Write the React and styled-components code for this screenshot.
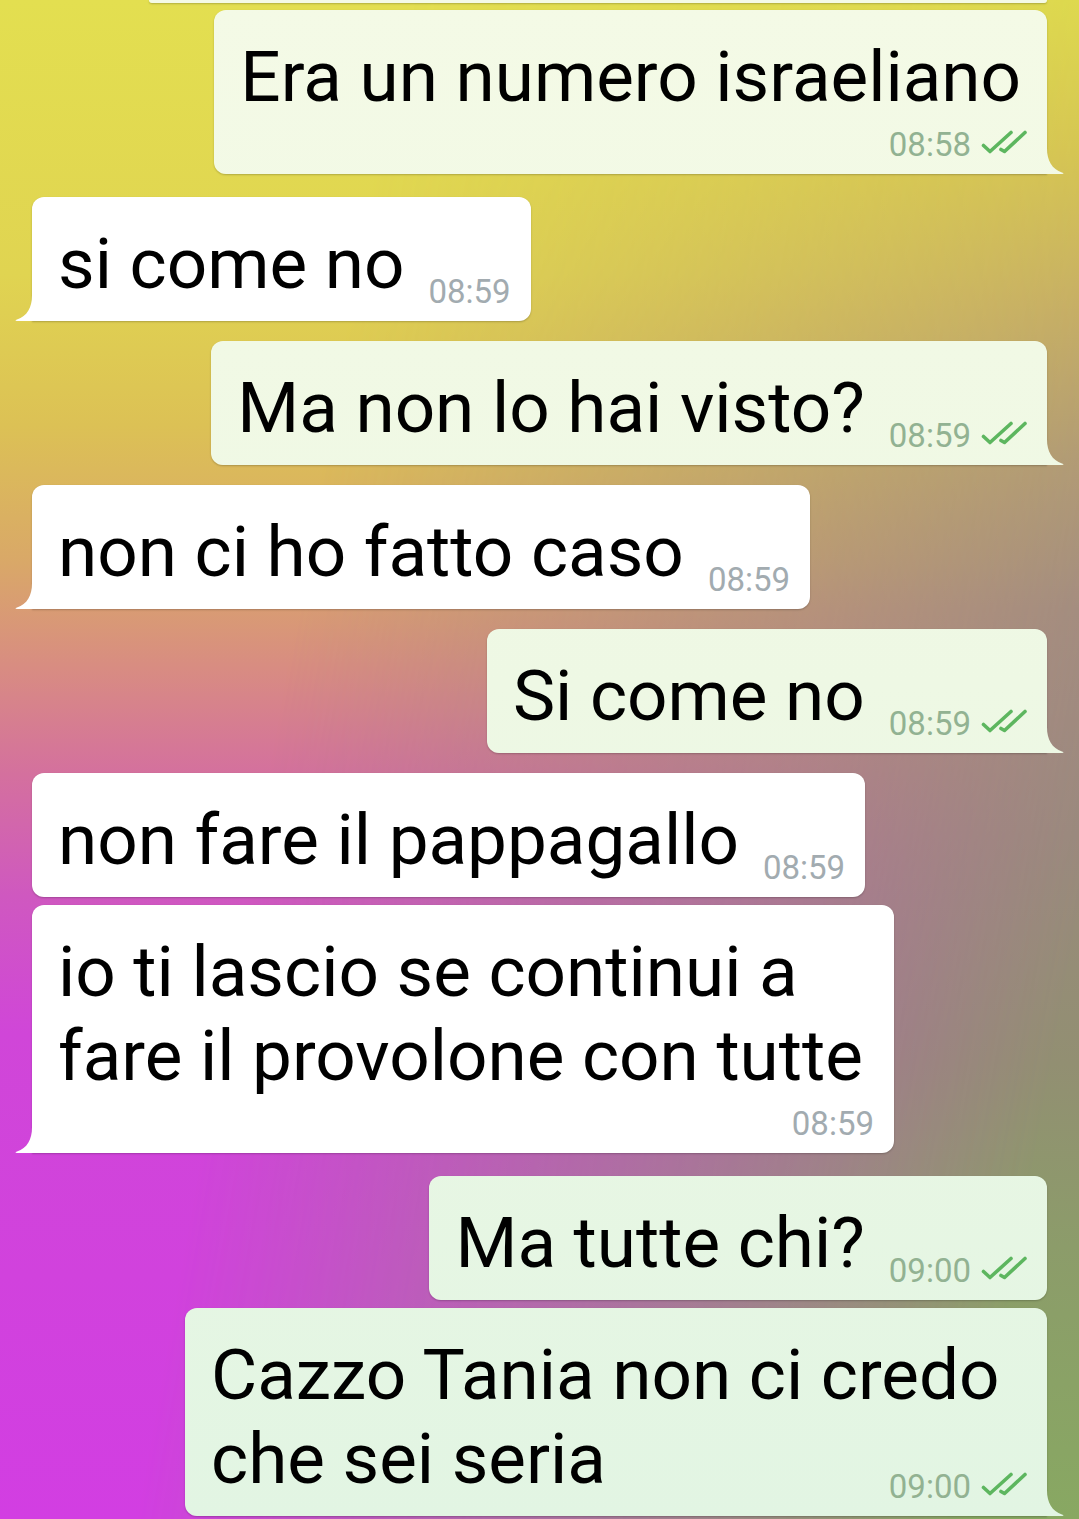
import React from 'react';
import styled, { createGlobalStyle, css } from 'styled-components';

const GlobalStyle = createGlobalStyle`
  html, body {
    margin: 0;
    padding: 0;
  }
  body {
    font-family: Roboto, "Noto Sans", "Liberation Sans", sans-serif;
    overflow: hidden;
  }
`;

const outgoingFill = `linear-gradient(to bottom, #f4fae6 0%, #eef8e4 45%, #e2f5e3 100%) fixed`;

const Page = styled.div`
  position: relative;
  width: 1079px;
  height: 1519px;
  overflow: hidden;
  background: linear-gradient(
    to bottom,
    #e3df50 0%,
    #e0d451 18%,
    #dcc155 28%,
    #d9a868 37%,
    #d88c82 44%,
    #d4709e 51%,
    #cf58c0 59%,
    #d046d8 68%,
    #d23ee2 100%
  );

  &::before {                       /* 오른쪽 올리브 톤 */
    content: '';
    position: absolute;
    inset: 0;
    background: linear-gradient(
      to bottom,
      #dcd74e 0%,
      #d3c154 10%,
      #c3aa68 20%,
      #ad9878 30%,
      #a08c80 40%,
      #998a7c 55%,
      #928f72 70%,
      #8c9c6a 82%,
      #88a862 100%
    );
    mask-image: linear-gradient(100deg, transparent 30%, black 92%);
  }
`;

const List = styled.div`
  position: relative;
  display: flex;
  flex-direction: column;
  padding: 0 32px;
`;

const PrevEdge = styled.div`
  align-self: flex-end;
  width: 898px;
  height: 3px;
  border-radius: 0 0 12px 12px;
  background: ${outgoingFill};
  box-shadow: 0 1px 2px rgba(0, 0, 0, 0.22);
`;

const Bubble = styled.div`
  position: relative;
  display: flow-root;
  box-sizing: border-box;
  align-self: ${p => (p.$out ? 'flex-end' : 'flex-start')};
  max-width: 862px;
  margin-top: ${p => p.$gap}px;
  padding: 25px 26px 13px;
  border-radius: 12px;
  background: ${p => (p.$out ? outgoingFill : '#ffffff')};
  box-shadow: 0 1px 2px rgba(0, 0, 0, 0.22);

  ${p => p.$tail && !p.$out && css`
    border-bottom-left-radius: 0;
    &::after {
      content: '';
      position: absolute;
      left: -17px;
      bottom: 0;
      width: 18px;
      height: 26px;
      background: inherit;
      clip-path: path('M17 0 C17 13 12 21 2 24.5 C0 25.2 0 26 2 26 L18 26 L18 0 Z');
    }
  `}

  ${p => p.$tail && p.$out && css`
    border-bottom-right-radius: 0;
    &::after {
      content: '';
      position: absolute;
      right: -17px;
      bottom: 0;
      width: 18px;
      height: 26px;
      background: inherit;
      clip-path: path('M1 0 C1 13 6 21 16 24.5 C18 25.2 18 26 16 26 L0 26 L0 0 Z');
    }
  `}
`;

const Text = styled.div`
  font-size: 71px;
  line-height: 84px;
  color: #000;
`;

const Meta = styled.span`
  display: flex;
  align-items: flex-start;
  gap: 10px;
  font-size: 33px;
  line-height: 33px;
  color: ${p => (p.$out ? '#92b292' : '#a2abb0')};

  ${p => (p.$below
    ? css`
      justify-content: flex-end;
      margin: 9px -6px 0 0;
    `
    : css`
      float: right;
      margin: 53px -6px 0 24px;
    `)}
`;

const Check = styled.svg`
  flex: none;
  margin-top: 2px;
`;

const DoubleCheck = () => (
  <Check width="46" height="24" viewBox="0 0 46 24" fill="none"
    stroke="#5db65f" strokeWidth="3.6" strokeLinecap="round" strokeLinejoin="round">
    <path d="M2.5 15.5 L9 21.5 L30 2.5" />
    <path d="M20 19.5 L23.5 21.5 L44 2.5" />
  </Check>
);

const messages = [
  { out: true, text: 'Era un numero israeliano', time: '08:58', gap: 7, tail: true, below: true },
  { out: false, text: 'si come no', time: '08:59', gap: 23, tail: true },
  { out: true, text: 'Ma non lo hai visto?', time: '08:59', gap: 20, tail: true },
  { out: false, text: 'non ci ho fatto caso', time: '08:59', gap: 20, tail: true },
  { out: true, text: 'Si come no', time: '08:59', gap: 20, tail: true },
  { out: false, text: 'non fare il pappagallo', time: '08:59', gap: 20 },
  { out: false, text: 'io ti lascio se continui a fare il provolone con tutte', time: '08:59', gap: 8, tail: true, below: true },
  { out: true, text: 'Ma tutte chi?', time: '09:00', gap: 23 },
  { out: true, text: 'Cazzo Tania non ci credo che sei seria', time: '09:00', gap: 8, tail: true },
];

const Message = ({ out, text, time, gap, tail, below }) => {
  const meta = (
    <Meta $out={out} $below={below}>
      <span>{time}</span>
      {out && <DoubleCheck />}
    </Meta>
  );
  return (
    <Bubble $out={out} $gap={gap} $tail={tail}>
      <Text>
        {text}
        {!below && meta}
      </Text>
      {below && meta}
    </Bubble>
  );
};

export default function App() {
  return (
    <Page>
      <GlobalStyle />
      <List>
        <PrevEdge />
        {messages.map((m, i) => (
          <Message key={i} {...m} />
        ))}
      </List>
    </Page>
  );
}
